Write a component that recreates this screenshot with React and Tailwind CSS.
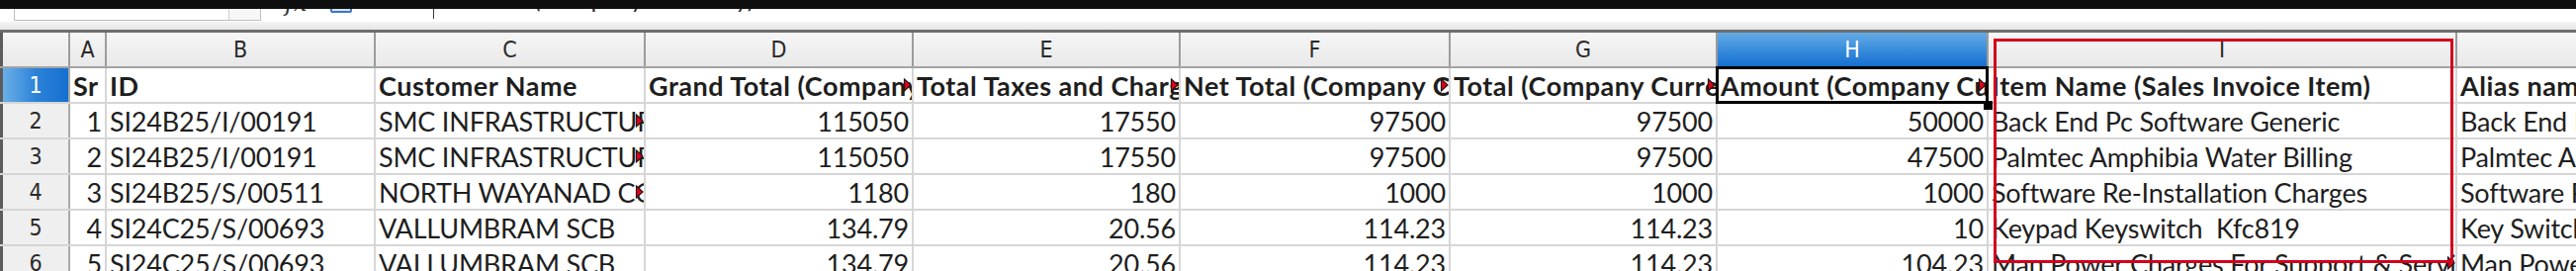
import React from 'react';

// column widths measured from the sheet
const COLS = [
  { id: 'A', w: 'w-[37px]' },
  { id: 'B', w: 'w-[272px]' },
  { id: 'C', w: 'w-[273px]' },
  { id: 'D', w: 'w-[271px]' },
  { id: 'E', w: 'w-[270px]' },
  { id: 'F', w: 'w-[273px]' },
  { id: 'G', w: 'w-[270px]' },
  { id: 'H', w: 'w-[274px]' },
  { id: 'I', w: 'w-[474px]' },
  { id: 'J', w: 'w-[272px]' },
];

const NUMERIC = [true, false, false, true, true, true, true, true, false, false];

const HEAD = {
  cells: [
    'Sr',
    'ID',
    'Customer Name',
    'Grand Total (Company Currency)',
    'Total Taxes and Charges (Company Currency)',
    'Net Total (Company Currency)',
    'Total (Company Currency)',
    'Amount (Company Currency)',
    'Item Name (Sales Invoice Item)',
    'Alias name',
  ],
  flags: [3, 4, 5, 6, 7],
};

const ROWS = [
  {
    cells: ['1', 'SI24B25/I/00191', 'SMC INFRASTRUCTURE PVT LTD', '115050', '17550', '97500', '97500', '50000', 'Back End Pc Software Generic', 'Back End Pc Software'],
    flags: [2],
  },
  {
    cells: ['2', 'SI24B25/I/00191', 'SMC INFRASTRUCTURE PVT LTD', '115050', '17550', '97500', '97500', '47500', 'Palmtec Amphibia Water Billing', 'Palmtec Amphibia'],
    flags: [2],
  },
  {
    cells: ['3', 'SI24B25/S/00511', 'NORTH WAYANAD CO-OP BANK', '1180', '180', '1000', '1000', '1000', 'Software Re-Installation Charges', 'Software Re-Installation'],
    flags: [2],
  },
  {
    cells: ['4', 'SI24C25/S/00693', 'VALLUMBRAM SCB', '134.79', '20.56', '114.23', '114.23', '10', 'Keypad Keyswitch\u00a0\u00a0Kfc819', 'Key Switch'],
    flags: [],
  },
  {
    cells: ['5', 'SI24C25/S/00693', 'VALLUMBRAM SCB', '134.79', '20.56', '114.23', '114.23', '104.23', 'Man Power Charges For Support & Service', 'Man Power Charges'],
    flags: [8],
  },
];

const Flag = () => (
  <svg className="absolute right-[0px] top-1/2 -translate-y-1/2" width="9" height="15" viewBox="0 0 9 15">
    <path d="M1.5 1.5 L8 7.5 L1.5 13.5 Z" fill="#e3001b" stroke="#2a1414" strokeWidth="1.2" />
  </svg>
);

const Cell = ({ col, text, numeric, bold, flag, active }) => (
  <div className={`${col.w} shrink-0 h-full relative flex border-r-2 border-[#d6d6d6]`}>
    <div className={`flex-1 min-w-0 overflow-hidden flex items-center ${numeric ? 'justify-end pr-[3px]' : 'pl-[3px]'}`}>
      <span className={`whitespace-nowrap leading-none ${bold ? 'font-bold tracking-[0.5px]' : 'tracking-[-0.2px]'}`}>{text}</span>
    </div>
    {flag && <Flag />}
    {active && (
      <>
        <div className="absolute -left-[2px] -top-[2px] right-[-2px] bottom-[-2px] border-[3px] border-black pointer-events-none" />
        <div className="absolute right-[-6px] bottom-[-8px] w-[9px] h-[9px] bg-black z-10" />
      </>
    )}
  </div>
);

const RowHeader = ({ n, selected }) => (
  <div
    className={`w-[71px] shrink-0 h-full flex items-center justify-center border-l-[3px] border-l-[#5c5c5c] border-r-2 border-r-[#a9a9a9] font-['DejaVu_Sans_Condensed','DejaVu_Sans',sans-serif] [font-stretch:condensed] text-[23px] ${
      selected
        ? 'bg-gradient-to-r from-[#6ab0e8] via-[#2c82d8] to-[#1570d0] text-white'
        : 'bg-[#efefef] text-[#2a2a2a]'
    }`}
  >
    {n}
  </div>
);

export default function App() {
  return (
    <div className="w-[2605px] h-[274px] overflow-hidden bg-white relative font-['Lato',sans-serif] text-[27px] text-[#1e1e1e]">
      {/* dark strip covering the top of the toolbar */}
      <div className="absolute top-0 left-0 right-0 h-[9px] bg-[#0e0e0e] z-20" />

      {/* formula bar */}
      <div className="h-[22px] bg-white flex items-start">
        <div className="ml-[14px] w-[250px] h-[21px] border border-[#bdbdbd] bg-white flex justify-end">
          <div className="w-[32px] h-full border-l border-[#cfcfcf] bg-[#f7f7f7]" />
        </div>
        <span className="ml-[24px] -mt-[9px] text-[24px] leading-none italic font-['DejaVu_Serif',serif] text-[#333]">fx</span>
        <div className="ml-[24px] -mt-[2px] w-[22px] h-[15px] border-2 border-[#3b78c9] rounded-[2px] bg-[#d4e3f5]" />
        <div className="ml-[82px] flex-1 h-[19px] border-l border-[#3c3c3c] bg-white pl-[6px] overflow-hidden">
          <span className="block -mt-[14px] text-[25px] leading-none text-[#333] whitespace-nowrap">Amount (Company Currency)</span>
        </div>
      </div>
      <div className="h-[8px] bg-gradient-to-b from-[#f4f4f4] to-[#e6e6e6]" />
      <div className="h-[3px] bg-[#6e6e6e]" />

      {/* column headers */}
      <div className="h-[36px] flex border-b-2 border-[#a3a3a3] font-['DejaVu_Sans_Condensed','DejaVu_Sans',sans-serif] [font-stretch:condensed] text-[23px]">
        <div className="w-[71px] shrink-0 h-full border-l-[3px] border-l-[#5c5c5c] border-r-2 border-r-[#9c9c9c] bg-gradient-to-b from-[#f6f6f6] to-[#e9e9e9]" />
        {COLS.map((c) => (
          <div
            key={c.id}
            className={`${c.w} shrink-0 h-full flex items-center justify-center border-r-2 border-[#9c9c9c] ${
              c.id === 'H'
                ? 'bg-gradient-to-b from-[#64abe4] via-[#3a8ddc] to-[#1270d1] text-white'
                : 'bg-gradient-to-b from-[#f6f6f6] to-[#e9e9e9] text-[#2a2a2a]'
            }`}
          >
            {c.id}
          </div>
        ))}
      </div>

      {/* header data row */}
      <div className="h-[36px] flex border-b-2 border-[#d6d6d6]">
        <RowHeader n={1} selected />
        {COLS.map((c, i) => (
          <Cell
            key={c.id}
            col={c}
            text={HEAD.cells[i]}
            bold
            flag={HEAD.flags.includes(i)}
            active={c.id === 'H'}
          />
        ))}
      </div>

      {ROWS.map((r, ri) => (
        <div key={ri} className="h-[36px] flex border-b-2 border-[#d6d6d6]">
          <RowHeader n={ri + 2} />
          {COLS.map((c, i) => (
            <Cell key={c.id} col={c} text={r.cells[i]} numeric={NUMERIC[i]} flag={r.flags.includes(i)} />
          ))}
        </div>
      ))}

      {/* red highlight around column I */}
      <div className="absolute left-[2016px] top-[39px] w-[465px] h-[227px] border-[3px] border-[#d2001c] z-30 pointer-events-none" />
    </div>
  );
}
